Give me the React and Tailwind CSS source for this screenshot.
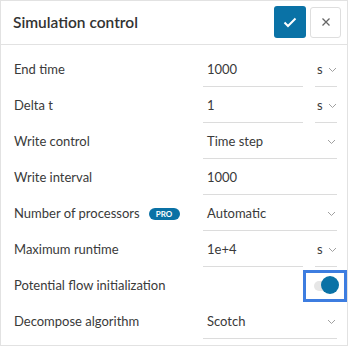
import React from "react";

const Chevron = () => (
  <svg width="9" height="6" viewBox="0 0 9 6" className="shrink-0">
    <polyline points="1,1 4.5,4.5 8,1" fill="none" stroke="#a0a0a0" strokeWidth="1" />
  </svg>
);

const ValueUnit = ({ value }) => (
  <div className="flex items-start gap-[12px] self-start">
    <div className="w-[100px] h-[34px] border-b border-[#dcdcdc] flex items-center pl-[4px] text-[13px] text-[#3a3a3a]">
      {value}
    </div>
    <div className="w-[22px] h-[34px] border-b border-[#dcdcdc] flex items-center justify-between pl-[2px] text-[13px] text-[#3a3a3a]">
      <span>s</span>
      <Chevron />
    </div>
  </div>
);

const Select = ({ value }) => (
  <div className="w-[134px] h-[34px] self-start border-b border-[#dcdcdc] flex items-center justify-between pl-[4px] pr-[1px] text-[13px] text-[#3a3a3a]">
    <span>{value}</span>
    <Chevron />
  </div>
);

const Input = ({ value }) => (
  <div className="w-[134px] h-[34px] self-start border-b border-[#dcdcdc] flex items-center pl-[4px] text-[13px] text-[#3a3a3a]">
    {value}
  </div>
);

const Row = ({ label, badge, children }) => (
  <div className="h-9 flex items-center">
    <div className="flex-1 flex items-center pl-[13px] text-[13px] text-[#3a3a3a]">
      <span>{label}</span>
      {badge && (
        <span className="ml-[9px] h-[12px] w-[31px] rounded-full bg-[#0a71a5] text-white text-[8px] font-bold flex items-center justify-center leading-none">
          PRO
        </span>
      )}
    </div>
    <div className="w-[134px]">{children}</div>
  </div>
);

export default function App() {
  return (
    <div className="w-[348px] h-[346px] border border-[#e2e2e2] bg-white" style={{ fontFamily: "Lato, 'Noto Sans', sans-serif" }}>
      <div className="h-[44px] border-b border-[#e2e2e2] flex items-center pl-[12px] pr-[6px]">
        <div className="flex-1 text-[15.5px] font-semibold text-[#333]">Simulation control</div>
        <div className="flex items-center gap-[4px] mt-[-1px]">
          <button className="w-[32px] h-[32px] rounded-[3px] bg-[#0a72a6] flex items-center justify-center">
            <svg width="14" height="11" viewBox="0 0 14 11">
              <polyline points="1.5,5.5 5,9 12.5,1.5" fill="none" stroke="white" strokeWidth="2" />
            </svg>
          </button>
          <button className="w-[31px] h-[31px] rounded-[3px] border border-[#dedede] bg-white flex items-center justify-center">
            <svg width="10" height="10" viewBox="0 0 10 10">
              <path d="M1.5 1.5 L8.5 8.5 M8.5 1.5 L1.5 8.5" stroke="#666" strokeWidth="1.3" />
            </svg>
          </button>
        </div>
      </div>
      <div className="pt-[7px] pr-[10px]">
        <Row label="End time"><ValueUnit value="1000" /></Row>
        <Row label="Delta t"><ValueUnit value="1" /></Row>
        <Row label="Write control"><Select value="Time step" /></Row>
        <Row label="Write interval"><Input value="1000" /></Row>
        <Row label="Number of processors" badge><Select value="Automatic" /></Row>
        <Row label="Maximum runtime"><ValueUnit value="1e+4" /></Row>
        <Row label="Potential flow initialization">
          <div className="flex justify-end">
            <button className="relative w-[38px] h-[26px] mr-[-7px] outline-3 outline-[#3d7de0]">
              <span className="absolute left-[8px] top-[8px] w-[22px] h-[10px] rounded-full bg-[#e6e6e6]" />
              <span className="absolute left-[15px] top-[3px] w-[18px] h-[18px] rounded-full bg-[#0a72a6]" />
            </button>
          </div>
        </Row>
        <Row label="Decompose algorithm"><Select value="Scotch" /></Row>
      </div>
    </div>
  );
}
